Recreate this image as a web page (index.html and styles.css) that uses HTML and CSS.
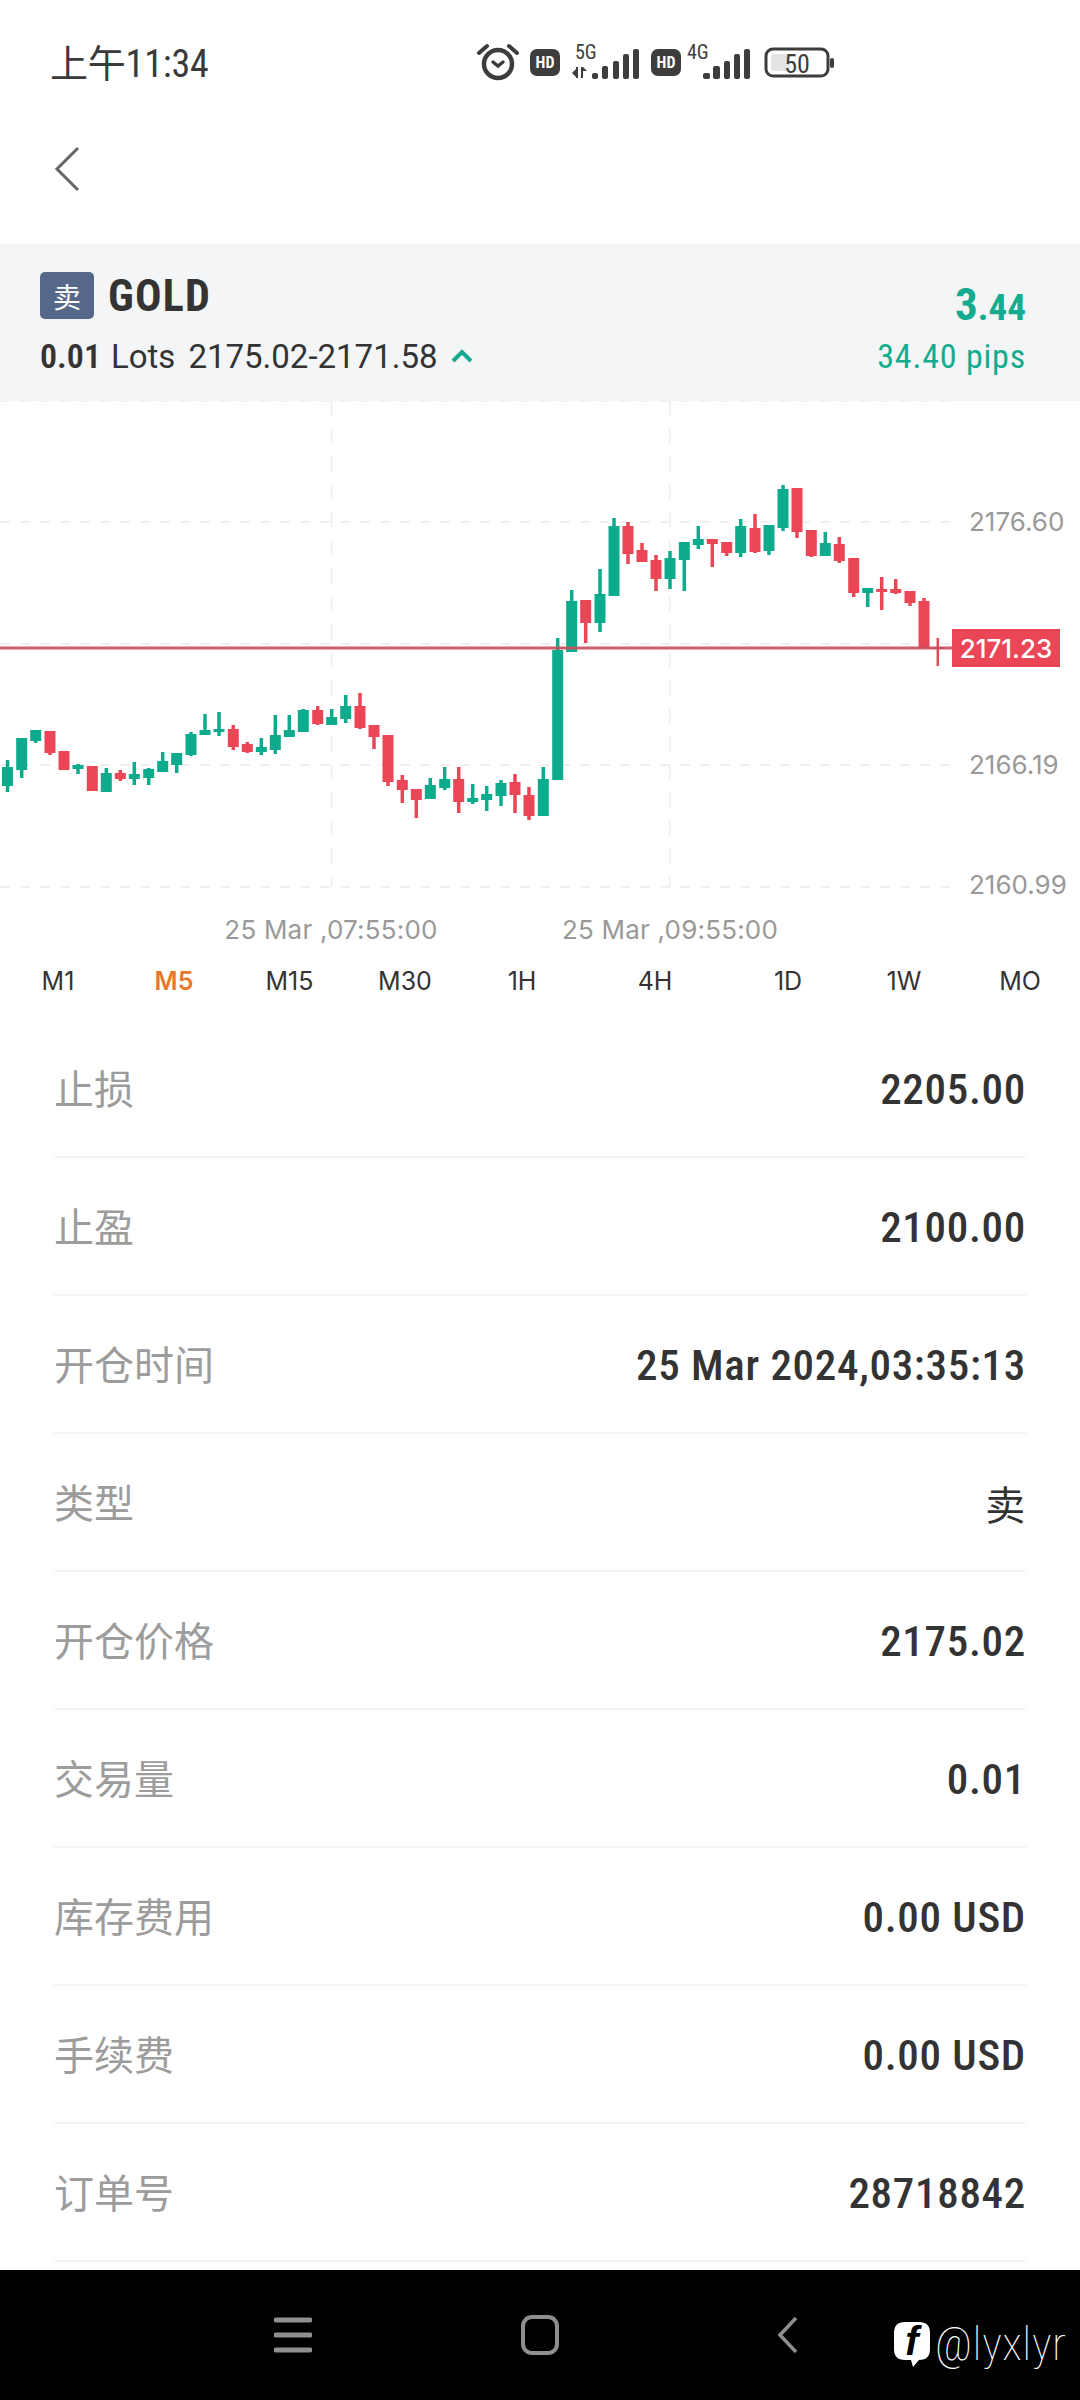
FILE: index.html
```html
<!DOCTYPE html>
<html>
<head>
    <meta charset="UTF-8">
    <title>GOLD</title>
    <link rel="stylesheet" href="styles.css">
</head>
<body>
    <div class="status">
        <span class="time">上午11:34</span>
        <svg class="status-icons" width="370" height="50" viewBox="470 40 370 50">
            <g fill="none" stroke="#3d3d3d" stroke-linecap="round">
                <circle cx="498" cy="65" r="14" stroke-width="4.5"/>
                <path d="M479 54 L487 47 M509 47 L517 54" stroke-width="4"/>
                <path d="M493 63 L498 67 L503 63" stroke-width="3.5"/>
            </g>
            <g fill="#3d3d3d">
                <rect x="530" y="50" width="30" height="27" rx="7"/>
                <rect x="651" y="50" width="30" height="27" rx="7"/>
                <path d="M572 74 L576 70 L576 68 L578 68 L578 79 L576 79 L576 78 Z M581 68 L583 68 L587 72 L583 72 L583 79 L581 79 Z"/>
                <rect x="592" y="74" width="6" height="6" rx="2"/>
                <rect x="602" y="67" width="6" height="13" rx="2"/>
                <rect x="613" y="62" width="6" height="18" rx="2"/>
                <rect x="623" y="55" width="6" height="25" rx="2"/>
                <rect x="633" y="50" width="6" height="30" rx="2"/>
                <rect x="703" y="74" width="7" height="6" rx="2"/>
                <rect x="713" y="67" width="7" height="13" rx="2"/>
                <rect x="724" y="62" width="6" height="18" rx="2"/>
                <rect x="734" y="55" width="6" height="25" rx="2"/>
                <rect x="744" y="50" width="6" height="30" rx="2"/>
                <rect x="830" y="59" width="4" height="10" rx="2"/>
            </g>
            <text class="hd" x="545" y="69">HD</text>
            <text class="hd" x="666" y="69">HD</text>
            <text class="net" x="575" y="60">5G</text>
            <text class="net" x="687" y="60">4G</text>
            <rect x="766" y="50" width="62" height="27" rx="7" fill="none" stroke="#3d3d3d" stroke-width="3"/>
            <rect x="771" y="55" width="19" height="17" rx="3" fill="#e4e4e4"/>
            <text class="batt" x="797" y="74">50</text>
        </svg>
    </div>

    <div class="toolbar">
        <svg width="26" height="46" viewBox="0 0 26 46">
            <path d="M24 2 L3 23 L24 44" fill="none" stroke="#666" stroke-width="3"/>
        </svg>
    </div>

    <div class="position">
        <div class="position-left">
            <div class="symbol">
                <span class="badge">卖</span>
                <span class="symbol-name">GOLD</span>
            </div>
            <div class="lots">
                <b>0.01</b>
                <span class="lots-unit">Lots</span>
                <span class="lots-price">2175.02-2171.58</span>
                <svg width="22" height="14" viewBox="0 0 22 14">
                    <path d="M2 12 L11 3 L20 12" fill="none" stroke="#14ab8e" stroke-width="4"/>
                </svg>
            </div>
        </div>
        <div class="position-right">
            <div class="profit">3<small>.44</small></div>
            <div class="pips">34.40 pips</div>
        </div>
    </div>

    <svg id="chart" class="chart" width="1080" height="549" viewBox="0 401 1080 549"></svg>

    <div class="periods">
        <span>M1</span>
        <span class="active">M5</span>
        <span>M15</span>
        <span>M30</span>
        <span>1H</span>
        <span>4H</span>
        <span>1D</span>
        <span>1W</span>
        <span>MO</span>
    </div>

    <div class="details">
        <div class="row"><span class="label">止损</span><span class="value">2205.00</span></div>
        <div class="row"><span class="label">止盈</span><span class="value">2100.00</span></div>
        <div class="row"><span class="label">开仓时间</span><span class="value">25 Mar 2024,03:35:13</span></div>
        <div class="row"><span class="label">类型</span><span class="value cjk">卖</span></div>
        <div class="row"><span class="label">开仓价格</span><span class="value">2175.02</span></div>
        <div class="row"><span class="label">交易量</span><span class="value">0.01</span></div>
        <div class="row"><span class="label">库存费用</span><span class="value">0.00 USD</span></div>
        <div class="row"><span class="label">手续费</span><span class="value">0.00 USD</span></div>
        <div class="row"><span class="label">订单号</span><span class="value">28718842</span></div>
    </div>

    <div class="navbar">
        <svg class="nav-menu" width="38" height="36" viewBox="0 0 38 36">
            <path d="M2 3 H36 M2 18 H36 M2 33 H36" stroke="#8f8f8f" stroke-width="5" stroke-linecap="round"/>
        </svg>
        <svg class="nav-home" width="38" height="40" viewBox="0 0 38 40">
            <rect x="2" y="2" width="34" height="36" rx="9" fill="none" stroke="#8f8f8f" stroke-width="4"/>
        </svg>
        <svg class="nav-back" width="20" height="36" viewBox="0 0 20 36">
            <path d="M18 1 L2 18 L18 35" fill="none" stroke="#8f8f8f" stroke-width="3.5"/>
        </svg>
        <div class="watermark">
            <svg class="fb-logo" width="38" height="46" viewBox="0 0 38 46">
                <path d="M12 1 H26 Q37 1 37 12 V28 Q37 39 26 39 L20 46 L18 39 H12 Q1 39 1 28 V12 Q1 1 12 1 Z" fill="#fff"/>
                <text class="fb" x="19" y="34">f</text>
            </svg>
            <span>@lyxlyr</span>
        </div>
    </div>

    <script src="chart.js"></script>
</body>
</html>
```

FILE: styles.css
```css
* {
    box-sizing: border-box;
}
body {
    margin: 0;
    width: 1080px;
    height: 2400px;
    overflow: hidden;
    background-color: #fff;
    font-family: Roboto, "Noto Sans CJK SC", sans-serif;
    font-stretch: 85%;
    color: #333;
}
.status {
    display: flex;
    align-items: center;
    height: 120px;
    padding: 0 0 0 50px;
}
.time {
    width: 160px;
    margin-right: 260px;
    font-size: 38px;
    letter-spacing: -0.2px;
    white-space: nowrap;
    color: #3a3a3a;
}
.status-icons {
    display: block;
    margin-top: 8px;
}
.hd {
    font-size: 16px;
    font-weight: 700;
    fill: #fff;
    text-anchor: middle;
}
.net {
    font-size: 20px;
    fill: #3d3d3d;
}
.batt {
    font-size: 26px;
    fill: #3d3d3d;
    text-anchor: middle;
}
.toolbar {
    height: 124px;
    padding: 26px 0 0 54px;
}
.toolbar svg {
    display: block;
}
.position {
    display: flex;
    justify-content: space-between;
    height: 157px;
    padding: 28px 54px 0 40px;
    background-color: #f4f5f7;
}
.symbol {
    display: flex;
    align-items: center;
    height: 47px;
}
.badge {
    display: flex;
    align-items: center;
    justify-content: center;
    width: 54px;
    height: 47px;
    margin-right: 14px;
    border-radius: 5px;
    background-color: #56688a;
    color: #fff;
    font-size: 28px;
}
.symbol-name {
    font-size: 44px;
    font-weight: 700;
    letter-spacing: 1.2px;
    color: #333;
}
.lots {
    display: flex;
    align-items: center;
    margin-top: 17px;
    font-size: 33px;
    font-stretch: 100%;
    white-space: nowrap;
}
.lots b {
    font-weight: 600;
    font-stretch: 85%;
    font-size: 34px;
    margin-right: 10px;
}
.lots-unit {
    margin-right: 13px;
}
.lots svg {
    margin-left: 13px;
}
.position-right {
    text-align: right;
    color: #14ab8e;
}
.profit {
    height: 47px;
    margin-top: 8px;
    font-size: 45px;
    font-weight: 700;
    line-height: 50px;
}
.profit small {
    font-size: 37px;
}
.pips {
    margin-top: 9px;
    font-size: 34px;
    letter-spacing: 0.8px;
}
.chart {
    display: block;
}
.axis {
    font-family: Inter, sans-serif;
    font-size: 26px;
    fill: #999;
}
.axis-date {
    letter-spacing: 0.2px;
    text-anchor: middle;
}
.tag-text {
    font-family: Inter, sans-serif;
    font-size: 26px;
    font-weight: 500;
    fill: #fff;
    text-anchor: middle;
}
.periods {
    display: grid;
    grid-template-columns: 116px 116px 115px 116px 118px 148px 118px 114px 118px;
    align-items: center;
    height: 70px;
    padding-bottom: 8px;
    font-family: Inter, sans-serif;
    font-size: 25px;
    color: #333;
    text-align: center;
}
.periods .active {
    color: #e8772e;
    font-weight: 600;
}
.details {
    height: 1250px;
}
.row {
    display: flex;
    align-items: center;
    justify-content: space-between;
    height: 138px;
    margin: 0 54px;
    border-bottom: 2px solid #f3f4f5;
}
.label {
    margin-bottom: 3px;
    font-size: 40px;
    color: #9c9c9c;
}
.value {
    margin-top: 2px;
    font-size: 43px;
    font-weight: 500;
    letter-spacing: 0.7px;
    color: #333;
}
.value.cjk {
    font-size: 40px;
    font-weight: 400;
}
.navbar {
    position: relative;
    display: flex;
    align-items: center;
    height: 130px;
    padding-left: 274px;
    background-color: #000;
}
.nav-home {
    margin-left: 209px;
}
.nav-back {
    margin-left: 219px;
}
.watermark {
    position: absolute;
    left: 893px;
    top: 49px;
    display: flex;
    align-items: center;
    color: #fff;
}
.watermark span {
    margin-left: 4px;
    font-size: 46px;
    font-weight: 100;
    letter-spacing: 0.6px;
    line-height: 50px;
}
.fb-logo {
    overflow: visible;
}
.fb {
    font-family: "Liberation Sans", sans-serif;
    font-size: 40px;
    font-weight: 700;
    font-style: italic;
    fill: #000;
    text-anchor: middle;
}
```

FILE: chart.js
```js
const NS = 'http://www.w3.org/2000/svg';
const GREEN = '#0dab8d';
const RED = '#ea4656';
const chart = document.getElementById('chart');

// x, high, body top, body bottom, low, colour (g / r)
const candles = [
    [7.5, 760, 767, 786, 792, 'g'], [21.7, 738, 738, 770, 778, 'g'], [35.7, 730, 730, 741, 743, 'g'],
    [50, 731, 731, 753, 755, 'r'], [64, 751, 751, 770, 770, 'r'], [78, 764, 765, 769, 774, 'g'],
    [92.3, 766, 766, 791, 791, 'r'], [106.3, 768, 773, 792, 792, 'g'], [120.3, 770, 773, 779, 781, 'r'],
    [134.3, 762, 774, 779, 785, 'g'], [148.7, 768, 769, 778, 785, 'g'], [162.7, 752, 761, 772, 772, 'g'],
    [176.7, 753, 753, 765, 773, 'g'], [191, 732, 734, 755, 756, 'g'], [205, 714, 730, 735, 735, 'g'],
    [219, 712, 729, 732, 736, 'g'], [233.3, 725, 729, 747, 750, 'r'], [247.3, 742, 744, 752, 753, 'r'],
    [261.3, 738, 747, 752, 755, 'g'], [275.3, 715, 735, 750, 754, 'g'], [289.3, 715, 730, 737, 737, 'g'],
    [303.3, 709, 710, 732, 732, 'g'], [317.7, 706, 710, 724, 725, 'r'], [331.7, 709, 717, 725, 725, 'g'],
    [345.7, 695, 706, 719, 723, 'g'], [360, 693, 706, 728, 729, 'r'], [374, 725, 725, 737, 749, 'r'],
    [388, 735, 735, 782, 786, 'r'], [402.3, 775, 780, 790, 803, 'r'], [416.3, 789, 789, 800, 818, 'r'],
    [430.3, 778, 785, 799, 799, 'g'], [444.7, 767, 779, 788, 790, 'g'], [458.7, 767, 779, 802, 813, 'r'],
    [472.7, 784, 798, 802, 804, 'g'], [486.7, 786, 794, 800, 811, 'g'], [501, 780, 783, 796, 806, 'g'],
    [515, 774, 782, 795, 813, 'r'], [529, 787, 795, 816, 820, 'r'], [543.3, 767, 779, 816, 816, 'g'],
    [557.7, 638, 650, 780, 780, 'g'], [571.7, 590, 601, 652, 652, 'g'], [585.7, 600, 600, 623, 643, 'r'],
    [600, 569, 594, 623, 632, 'g'], [614, 518, 526, 596, 596, 'g'], [628, 522, 526, 554, 564, 'r'],
    [642, 543, 550, 562, 562, 'r'], [656, 555, 560, 579, 591, 'r'], [670, 551, 558, 579, 589, 'g'],
    [684.3, 542, 542, 560, 591, 'g'], [698.3, 526, 539, 545, 549, 'g'], [712.3, 539, 539, 544, 567, 'r'],
    [726.7, 542, 542, 553, 556, 'r'], [740.7, 519, 526, 553, 557, 'g'], [755, 514, 528, 552, 553, 'r'],
    [769, 525, 525, 551, 555, 'g'], [783, 485, 489, 528, 531, 'g'], [797, 488, 488, 532, 538, 'r'],
    [811.3, 530, 530, 556, 557, 'r'], [825.3, 532, 543, 556, 556, 'g'], [839.3, 537, 544, 561, 563, 'r'],
    [853.7, 558, 558, 593, 597, 'r'], [867.7, 588, 588, 593, 607, 'g'], [881.7, 577, 589, 592, 610, 'r'],
    [895.7, 579, 589, 593, 594, 'r'], [910, 591, 591, 603, 606, 'r'], [924, 598, 601, 648, 648, 'r'],
    [938.3, 638, 647, 649, 666, 'r']
];

function add(tag, attrs, text) {
    const el = document.createElementNS(NS, tag);
    for (const key in attrs) {
        el.setAttribute(key, attrs[key]);
    }
    if (text) {
        el.textContent = text;
    }
    chart.appendChild(el);
    return el;
}

// dashed grid
[401, 522, 644, 765, 887].forEach(y => {
    add('line', { x1: 0, x2: 950, y1: y, y2: y, stroke: '#f0f0f0', 'stroke-width': 2, 'stroke-dasharray': '10 10' });
});
[331.5, 670].forEach(x => {
    add('line', { x1: x, x2: x, y1: 401, y2: 887, stroke: '#f0f0f0', 'stroke-width': 2, 'stroke-dasharray': '14 14' });
});

candles.forEach(([x, high, top, bottom, low, col]) => {
    const fill = col === 'g' ? GREEN : RED;
    const thin = top === 647;
    add('rect', { x: x - 1.75, y: high, width: thin ? 2.5 : 3.5, height: low - high, fill: fill });
    add('rect', { x: x - 5.5, y: top, width: 11, height: Math.max(bottom - top, 2), fill: fill });
});

// current price line and tag
add('line', { x1: 0, x2: 953, y1: 648, y2: 648, stroke: '#c9505e', 'stroke-width': 3, 'stroke-opacity': 0.92 });
add('rect', { x: 952, y: 629, width: 108, height: 38, fill: RED });
add('text', { x: 1006, y: 658, class: 'tag-text' }, '2171.23');

add('text', { x: 969, y: 531, class: 'axis' }, '2176.60');
add('text', { x: 969, y: 774, class: 'axis' }, '2166.19');
add('text', { x: 969, y: 894, class: 'axis' }, '2160.99');
add('text', { x: 331, y: 939, class: 'axis axis-date' }, '25 Mar ,07:55:00');
add('text', { x: 670, y: 939, class: 'axis axis-date' }, '25 Mar ,09:55:00');
```
